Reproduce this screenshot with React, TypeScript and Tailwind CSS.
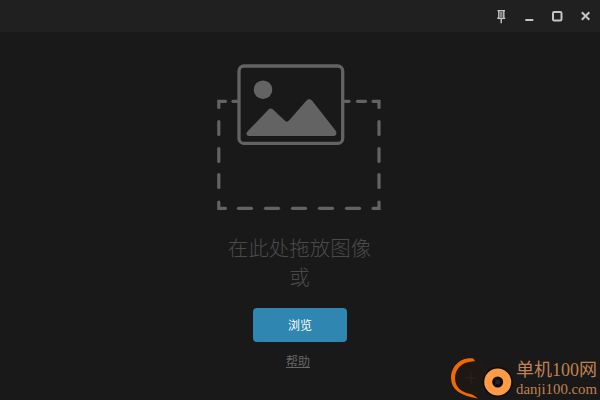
import React from "react";

const cjk = { fontFamily: '"Noto Sans CJK SC", "Noto Sans", sans-serif' };

function Illustration() {
  return (
    <svg width="170" height="150" viewBox="215 62 170 150" fill="none">
      <g stroke="#636363" strokeWidth="3.200" strokeLinecap="round" fill="none">
        <path d="M225.500 101.300H218.800V107.500" />
        <path d="M233 101.300H237" />
        <path d="M345 101.300H349" />
        <path d="M357.500 101.300H365.500" />
        <path d="M373 101.300H379V107.500" />
        <path d="M379 121.500V134.500" />
        <path d="M379 148.500V161.500" />
        <path d="M379 174.500V187.500" />
        <path d="M379 202V208.300H373" />
        <path d="M359.500 208.300H346.500" />
        <path d="M332.500 208.300H319.500" />
        <path d="M305.500 208.300H292.500" />
        <path d="M278.500 208.300H265.500" />
        <path d="M251.500 208.300H238.500" />
        <path d="M225.500 208.300H218.800V202" />
        <path d="M218.800 187.500V174.500" />
        <path d="M218.800 161.500V148.500" />
        <path d="M218.800 134.500V121.500" />
      </g>
      <rect x="239" y="66" width="103.700" height="77.400" rx="5" stroke="#636363" strokeWidth="3.300" fill="#191919" />
      <circle cx="263" cy="89.700" r="9.300" fill="#636363" />
      <path
        d="M249 136C246.500 136 245.500 133.500 247.500 131.500L268.500 109.500C270 108 271.500 108 273 109.500L285 120.700C286.500 122 287.500 122 289 120.500L306.500 100.500C308.500 98.500 310 98.500 312 100.500L335.500 130.500C337.500 133 336 136 333.500 136Z"
        fill="#636363"
      />
    </svg>
  );
}

function Watermark() {
  return (
    <div className="absolute right-0 bottom-0 flex h-[50px] w-[160px] items-center">
      <svg width="76" height="50" viewBox="440 350 76 50" className="shrink-0">
        <circle cx="471" cy="378" r="16" fill="#1e1815" stroke="#2a1c14" strokeWidth="1" />
        <path d="M471 372V384M465 378H477" stroke="#33201a" strokeWidth="1" />
        <path
          d="M473 358.500C461 357 451 366 451 378C451 389 460 396 478 398.500C474 395.500 472 394 468 393.500C460 391.500 455 386 455 378C455 369 462 362 472 361.500C473 361.500 474 361 475 361.500C474.500 360 474 359 473 358.500Z"
          fill="#f06a00"
        />
        <circle cx="497.700" cy="382" r="15" fill="#0c0c0c" />
        <circle cx="497.700" cy="382" r="13.500" fill="#ff9a45" />
        <circle cx="497.700" cy="382" r="5.500" fill="#0c0c0c" />
        <circle cx="497.700" cy="382" r="2.500" fill="#222222" />
      </svg>
      <div className="flex flex-col pt-[8px]" style={{ fontFamily: '"Liberation Serif", "Noto Sans CJK SC", serif' }}>
        <span className="text-[18px] leading-[21px] whitespace-nowrap text-[#c08250]">单机100网</span>
        <span className="text-[14.800px] leading-[17px] whitespace-nowrap text-[#c08250]">danji100.com</span>
      </div>
    </div>
  );
}

export default function App() {
  return (
    <div className="relative flex h-[400px] w-[600px] flex-col overflow-hidden bg-[#191919]" style={cjk}>
      <div className="flex h-[32px] shrink-0 items-center justify-end bg-[#202020]">
        <svg width="120" height="32" viewBox="480 0 120 32" fill="none" stroke="#c4c4c4">
          <path d="M497.500 10.700H505" strokeWidth="1.400" />
          <path d="M498.800 11V18M503.800 11V18" strokeWidth="1.400" />
          <path d="M500 12V17H502.600V12Z" fill="#8a8a8a" stroke="none" />
          <path d="M497.300 18.300H505.200" strokeWidth="1.500" />
          <path d="M501.200 18.500V23.300" strokeWidth="1.400" />
          <path d="M525.300 20H533.300" strokeWidth="2" />
          <rect x="553" y="12" width="8.500" height="8.500" rx="1.200" strokeWidth="2" />
          <path d="M581.800 12.300L589.300 19.800M589.300 12.300L581.800 19.800" strokeWidth="2" />
        </svg>
      </div>
      <div className="flex flex-1 flex-col items-center pt-[30px]">
        <Illustration />
        <div className="mt-[21px] mr-[1px] text-center text-[20.500px] leading-[29px] font-light text-[#4a4a4a]">
          <div>在此处拖放图像</div>
          <div>或</div>
        </div>
        <button className="mt-[17px] h-[34px] w-[94px] rounded-[4px] bg-[#2e86b1] text-[12px] text-white">浏览</button>
        <a className="mt-[10px] mr-[4px] text-[12px] text-[#666666] underline">帮助</a>
      </div>
      <Watermark />
    </div>
  );
}
